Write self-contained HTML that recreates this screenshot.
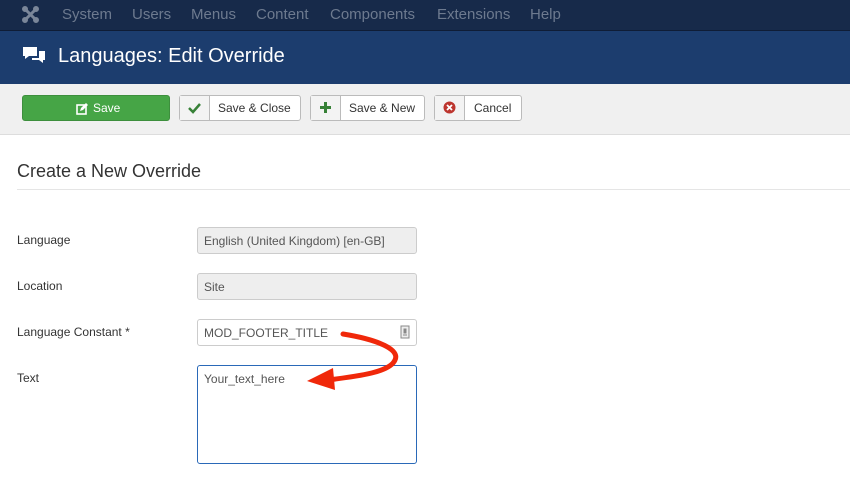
<!DOCTYPE html><html><head><style>
body{margin:0;width:850px;height:478px;overflow:hidden;font-family:"Liberation Sans",sans-serif;background:#fff;position:relative}
.nav{position:absolute;top:0;left:0;width:850px;height:30px;background:#172a4a;border-bottom:1px solid #0f1d36}
.nav span{position:absolute;top:6px;font-size:15px;color:#6d7a8f}
.hdr{position:absolute;top:31px;left:0;width:850px;height:53px;background:#1c3d6e}
.hdr h1{position:absolute;left:58px;top:14px;margin:0;font-weight:normal;font-size:20px;color:#fff}
.tb{position:absolute;top:84px;left:0;width:850px;height:50px;background:#f0f0f0;border-bottom:1px solid #ddd}
.btn{position:absolute;top:11px;height:26px;border:1px solid #bbb;border-radius:3px;background:#fff;font-size:12px;color:#333;box-sizing:border-box}
.btn .ic{position:absolute;left:0;top:0;width:29px;height:24px;border-right:1px solid #bbb;background:#f3f3f3}
.btn .t{position:absolute;top:5px}
h2{position:absolute;left:17px;top:161px;margin:0;font-weight:normal;font-size:18px;color:#333}
.hr{position:absolute;left:17px;top:189px;width:833px;height:1px;background:#e5e5e5}
.lb{position:absolute;left:17px;font-size:12px;color:#333}
.in{position:absolute;left:197px;width:220px;height:27px;box-sizing:border-box;border:1px solid #ccc;border-radius:3px;font-size:12px;color:#555;padding:6px 6px}
</style></head><body>
<div class="nav">
<svg style="position:absolute;left:22px;top:6px" width="17" height="17" viewBox="0 0 17 17"><g stroke="#7a8699" stroke-width="3" fill="none"><path d="M3 3L14 14M14 3L3 14"/><circle cx="3" cy="3" r="1.5"/><circle cx="14" cy="3" r="1.5"/><circle cx="3" cy="14" r="1.5"/><circle cx="14" cy="14" r="1.5"/></g></svg>
<span style="left:62px">System</span><span style="left:132px">Users</span><span style="left:191px">Menus</span><span style="left:256px">Content</span><span style="left:330px">Components</span><span style="left:437px">Extensions</span><span style="left:530px">Help</span></div>
<div class="hdr">
<svg style="position:absolute;left:22px;top:15px" width="24" height="20" viewBox="0 0 24 20"><path d="M1 1h14v9H7l-4 3v-3H1z" fill="#fff"/><path d="M17 5h6v9h-2v3l-4-3h-7v-2h7z" fill="#fff"/></svg>
<h1>Languages: Edit Override</h1></div>
<div class="tb">
<div class="btn" style="left:22px;width:148px;background:#46a546;border-color:#3d8f3d;color:#fff"><svg style="position:absolute;left:53px;top:7px" width="12" height="12" viewBox="0 0 12 12"><rect x="1" y="2" width="9" height="9" fill="none" stroke="#fff" stroke-width="1.6"/><path d="M4 8l1-3 5-5 2 2-5 5z" fill="#fff"/></svg><span class="t" style="left:70px">Save</span></div>
<div class="btn" style="left:179px;width:122px"><div class="ic"><svg style="position:absolute;left:8px;top:6px" width="13" height="12" viewBox="0 0 13 12"><path d="M1 6l4 4 7-8" stroke="#378137" stroke-width="2.5" fill="none"/></svg></div><span class="t" style="left:38px">Save &amp; Close</span></div>
<div class="btn" style="left:310px;width:115px"><div class="ic"><svg style="position:absolute;left:8px;top:5px" width="13" height="13" viewBox="0 0 13 13"><path d="M6.5 1v11M1 6.5h11" stroke="#378137" stroke-width="3"/></svg></div><span class="t" style="left:38px">Save &amp; New</span></div>
<div class="btn" style="left:434px;width:88px"><div class="ic"><svg style="position:absolute;left:8px;top:5px" width="13" height="13" viewBox="0 0 13 13"><circle cx="6.5" cy="6.5" r="6" fill="#bd362f"/><path d="M4 4l5 5M9 4l-5 5" stroke="#fff" stroke-width="1.8"/></svg></div><span class="t" style="left:39px">Cancel</span></div>
</div>
<h2>Create a New Override</h2><div class="hr"></div>
<div class="lb" style="top:233px">Language</div>
<div class="in" style="top:227px;background:#eee">English (United Kingdom) [en-GB]</div>
<div class="lb" style="top:279px">Location</div>
<div class="in" style="top:273px;background:#eee">Site</div>
<div class="lb" style="top:325px">Language Constant *</div>
<div class="in" style="top:319px;background:#fff">MOD_FOOTER_TITLE<svg style="position:absolute;right:6px;top:5px" width="10" height="14" viewBox="0 0 10 14"><rect x="1" y="1" width="8" height="12" fill="#eee" stroke="#888"/><path d="M3 10h4M4 8h2V4H4z" fill="#888" stroke="#888"/></svg></div>
<div class="lb" style="top:371px">Text</div>
<div class="in" style="top:365px;height:99px;border-color:#2a69b8;background:#fff">Your_text_here</div>
<svg style="position:absolute;left:0;top:0" width="850" height="478"><path d="M343 334C380 340 400 350 395 360C390 372 360 376 328 380" stroke="#f0280a" stroke-width="5" fill="none" stroke-linecap="round"/><path d="M307 381L333 368L335 390Z" fill="#f0280a"/></svg>
</body></html>
